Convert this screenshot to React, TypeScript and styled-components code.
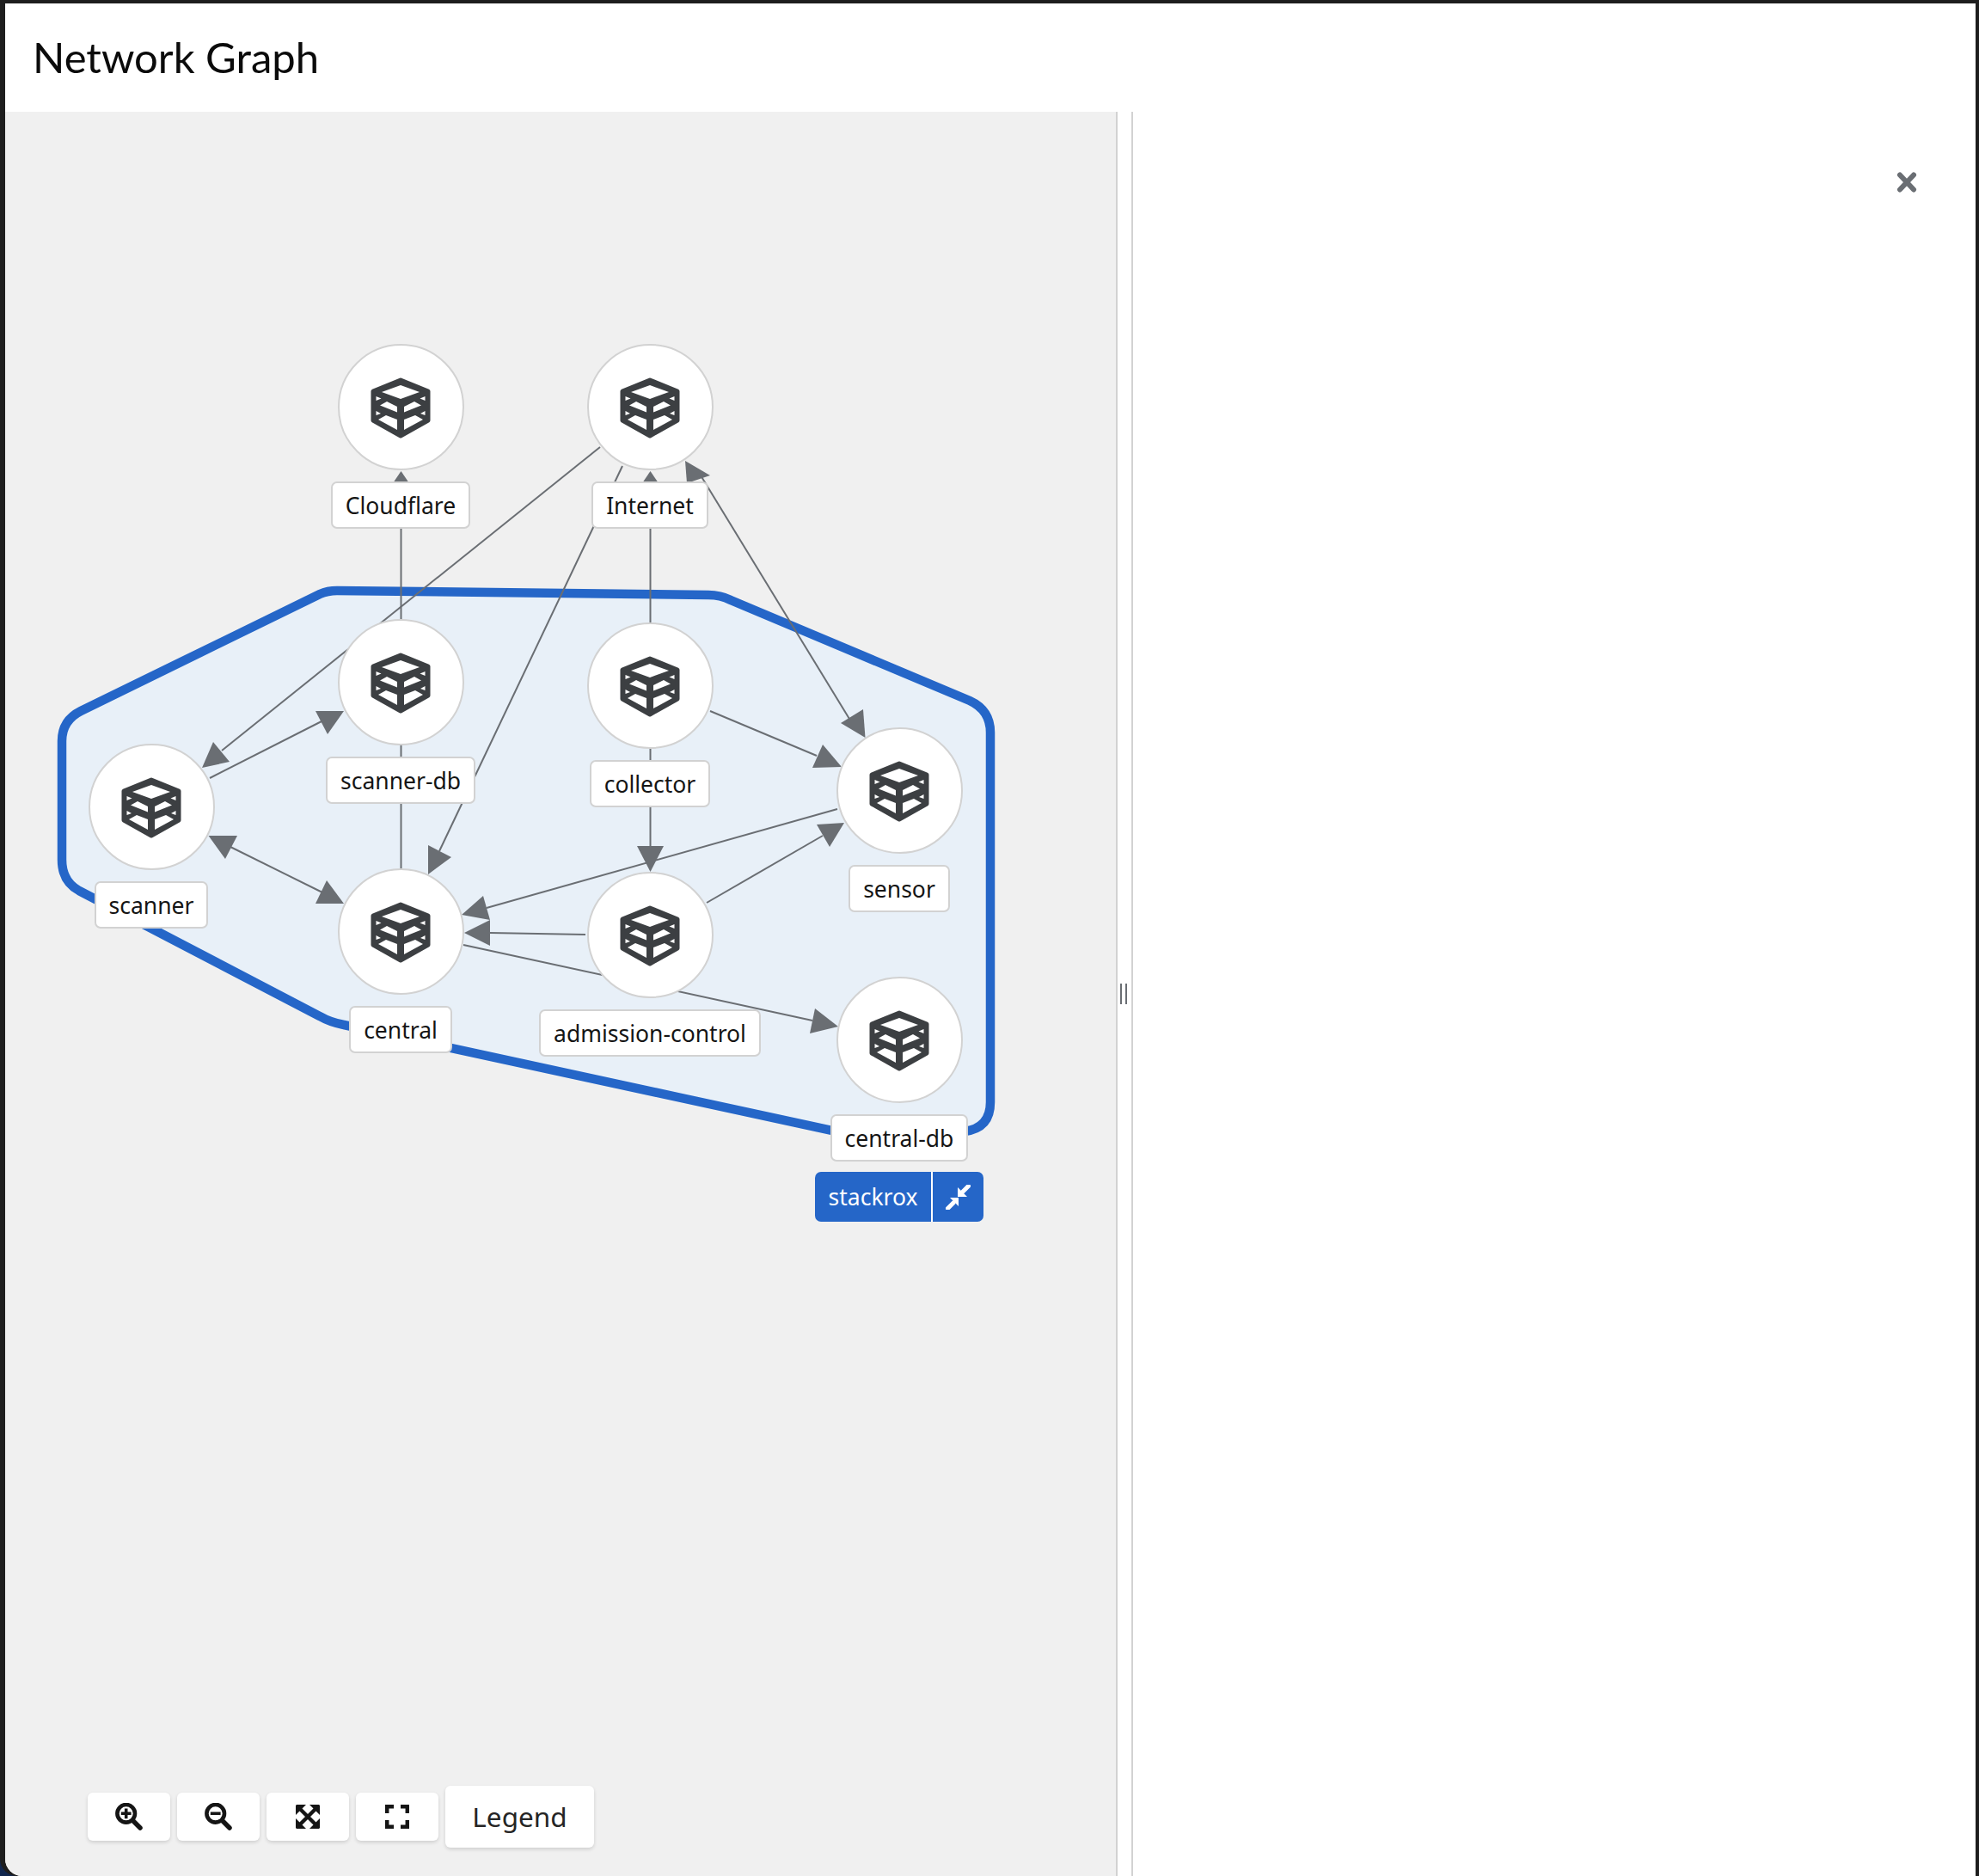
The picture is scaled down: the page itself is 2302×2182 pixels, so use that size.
import React from "react";
import styled, { createGlobalStyle } from "styled-components";

const GlobalStyle = createGlobalStyle`
  html, body {
    margin: 0;
    padding: 0;
    background: #11264d;
  }
  * {
    box-sizing: border-box;
  }
`;

const Frame = styled.div`
  width: 2302px;
  height: 2182px;
  padding: 4px 4px 0 6px;
  background: #1e1e1e;
  border-bottom-left-radius: 20px;
  font-family: "Noto Sans", "Liberation Sans", sans-serif;
  overflow: hidden;
`;
const Page = styled.div`
  display: flex;
  flex-direction: column;
  height: 100%;
  background: #fff;
  border-bottom-left-radius: 20px;
  overflow: hidden;
`;
const Header = styled.header`
  display: flex;
  align-items: center;
  height: 126px;
  padding: 0 0 2px 32px;
  flex: none;
`;
const Title = styled.h1`
  margin: 0;
  font-family: "Lato", "Noto Sans", sans-serif;
  font-size: 49px;
  font-weight: 400;
  color: #0b0b0b;
`;
const Body = styled.div`
  display: flex;
  flex: 1;
  min-height: 0;
`;
const GraphPanel = styled.section`
  position: relative;
  width: 1294px;
  flex: none;
  background: #f0f0f0;
  border-right: 2px solid #d2d2d2;
`;
const Splitter = styled.div`
  display: flex;
  align-items: center;
  justify-content: center;
  gap: 4px;
  width: 18px;
  flex: none;
  padding-right: 2px;
  background: #fff;
  border-right: 2px solid #d2d2d2;
`;
const Grip = styled.span`
  width: 2px;
  height: 24px;
  background: #6a6e73;
`;
const Side = styled.aside`
  flex: 1;
  display: flex;
  justify-content: flex-end;
  align-items: flex-start;
  padding: 70px 68px 0 0;
  background: #fff;
`;
const CloseIcon = styled.svg`
  display: block;
  width: 24px;
  height: 24px;
  color: #6a6e73;
`;
const Edges = styled.svg`
  position: absolute;
  left: 0;
  top: 0;
`;
const NodeGroup = styled.div`
  position: absolute;
  display: flex;
  flex-direction: column;
  align-items: center;
  gap: 13px;
  width: 400px;
  margin-left: -200px;
`;
const Circle = styled.div`
  display: flex;
  align-items: center;
  justify-content: center;
  width: 147px;
  height: 147px;
  border-radius: 50%;
  background: #fff;
  border: 2px solid #d2d2d2;
`;
const NodeLabel = styled.div`
  display: flex;
  align-items: center;
  height: 55px;
  padding: 0 15px;
  border-radius: 7px;
  background: #fff;
  border: 2px solid #d2d2d2;
  font-size: 26.5px;
  color: #151515;
  white-space: nowrap;
`;
const GroupBadge = styled.div`
  position: absolute;
  left: 942px;
  top: 1233px;
  display: flex;
  height: 58px;
  width: 196px;
  border-radius: 7px;
  background: #2566c8;
  color: #fff;
  font-size: 26.5px;
  overflow: hidden;
`;
const GroupName = styled.div`
  display: flex;
  align-items: center;
  justify-content: center;
  width: 137px;
  border-right: 2px solid #fff;
`;
const GroupToggle = styled.div`
  flex: 1;
  display: flex;
  align-items: center;
  justify-content: center;
`;
const Toolbar = styled.div`
  position: absolute;
  left: 96px;
  bottom: 33px;
  display: flex;
  align-items: center;
  gap: 8px;
`;
const ToolButton = styled.button`
  display: flex;
  align-items: center;
  justify-content: center;
  width: 96px;
  height: 56px;
  padding: 0;
  border: 0;
  border-radius: 6px;
  background: #fff;
  color: #151515;
  box-shadow: 0 2px 4px rgba(3, 3, 3, 0.14);
`;
const LegendButton = styled(ToolButton)`
  width: 173px;
  height: 72px;
  padding-bottom: 2px;
  font-family: "Noto Sans", sans-serif;
  font-size: 31.5px;
  font-weight: 400;
  color: #252525;
`;

const OX = 6;
const OY = 130;
const CANVAS_W = 1292;
const CANVAS_H = 2052;

// node centres in page pixels
const nodes = [
  { name: "Cloudflare", x: 466, y: 473 },
  { name: "Internet", x: 756, y: 473 },
  { name: "scanner-db", x: 466, y: 793 },
  { name: "collector", x: 756, y: 797 },
  { name: "scanner", x: 176, y: 938 },
  { name: "central", x: 466, y: 1083 },
  { name: "admission-control", x: 756, y: 1087 },
  { name: "sensor", x: 1046, y: 919 },
  { name: "central-db", x: 1046, y: 1209 },
];

const lines = [
  [466.5, 1010, 466.5, 560],
  [756.5, 724, 756.5, 560],
  [698, 520, 258, 873],
  [244, 905, 376, 838],
  [724, 542, 511, 990],
  [812, 548, 991, 841],
  [268, 985, 375, 1038],
  [826, 827, 950, 879],
  [756.5, 870, 756.5, 990],
  [974, 941, 566, 1056],
  [822, 1050, 957, 972],
  [681, 1087, 570, 1085],
  [539, 1099, 945, 1187],
];

const heads = [
  "466.5,548 457,562 476,562",
  "756.5,548 747,562 766,562",
  "235,893 248,863 267,886",
  "400,827 367,827 381,854",
  "498,1017 498,983 525,997",
  "797,536 826,553 799,562",
  "1006.5,858 978,841 1004,825",
  "242.5,972 276,972 262,999",
  "400,1051 367,1051 380,1024",
  "979,892 945,893 957,866",
  "756.5,1014 741,984 772,984",
  "537,1064 562,1042 570,1070",
  "982,957 950,959 965,985",
  "540,1085 570,1070 570,1100",
  "975,1194 948,1173 942,1202",
];

const hull =
  "M72 862 Q72 838 94 827 L372 691 Q381 687 392 687 L824 692 Q838 692 850 698 L1128 815 Q1152 826 1152 852 L1152 1282 Q1152 1312 1122 1316 L1000 1322 L400 1192 Q384 1189 372 1182 L92 1036 Q72 1025 72 1000 Z";

function Cube() {
  const right = [
    "0,-26 22,-18 0,-10",
    "28.5,-13 28.5,-8 22.5,-10.5",
    "4,-1 16,-7 24,-2.5 4,5.5",
    "28.5,4 28.5,9 23,7",
    "4,14 17,9 26,14 4,26",
  ];
  return (
    <svg width="76" height="76" viewBox="-38 -38 76 76">
      <polygon
        points="0,-32 32,-19 32,15 0,33 -32,15 -32,-19"
        fill="#3c3f42"
        stroke="#3c3f42"
        strokeWidth="5"
        strokeLinejoin="round"
      />
      <g fill="#fff">
        {right.map((p) => (
          <polygon key={p} points={p} />
        ))}
        {right.map((p) => (
          <polygon key={p} points={p} transform="scale(-1 1)" />
        ))}
      </g>
    </svg>
  );
}

function ZoomIcon({ plus }: { plus?: boolean }) {
  return (
    <svg width="32" height="32" viewBox="0 0 32 32" fill="none" stroke="currentColor">
      <circle cx="12.7" cy="12.3" r="10.3" strokeWidth="4.6" />
      <path d="M20.5 20.5L29 29" strokeWidth="5.5" strokeLinecap="round" />
      <path d="M6.8 12.3H18.6" strokeWidth="3.6" />
      {plus && <path d="M12.7 6.4V18.2" strokeWidth="3.6" />}
    </svg>
  );
}

function FitIcon() {
  return (
    <svg width="28" height="28" viewBox="0 0 28 28" fill="currentColor">
      <path d="M5 5L23 23M23 5L5 23" stroke="currentColor" strokeWidth="4.4" />
      <path d="M1 0H12L0 12V1Z" />
      <path d="M27 0H16L28 12V1Z" />
      <path d="M1 28H12L0 16V27Z" />
      <path d="M27 28H16L28 16V27Z" />
    </svg>
  );
}

function FullIcon() {
  return (
    <svg width="28" height="28" viewBox="0 0 28 28" fill="none" stroke="currentColor" strokeWidth="4.5">
      <path d="M2.2 10V2.2H10M18 2.2H25.8V10M25.8 18V25.8H18M10 25.8H2.2V18" />
    </svg>
  );
}

function CollapseIcon() {
  return (
    <svg width="29" height="29" viewBox="0 0 29 29" fill="#fff">
      <path d="M15 15H5L15 25Z" />
      <path d="M14 14V3L25 14Z" />
      <path d="M9 21L2.5 27.5M20 8L26.5 1.5" stroke="#fff" strokeWidth="5" strokeLinecap="round" />
    </svg>
  );
}

export default function App() {
  return (
    <>
      <GlobalStyle />
      <Frame>
        <Page>
          <Header>
            <Title>Network Graph</Title>
          </Header>
          <Body>
            <GraphPanel>
              <Edges
                width={CANVAS_W}
                height={CANVAS_H}
                viewBox={`${OX} ${OY} ${CANVAS_W} ${CANVAS_H}`}
              >
                <path d={hull} fill="#e8f0f8" stroke="#2566c8" strokeWidth="10.5" />
                {lines.map(([x1, y1, x2, y2]) => (
                  <line
                    key={`${x1}-${y1}`}
                    x1={x1}
                    y1={y1}
                    x2={x2}
                    y2={y2}
                    stroke="#6a6e73"
                    strokeWidth="2"
                  />
                ))}
                {heads.map((points) => (
                  <polygon key={points} points={points} fill="#6a6e73" />
                ))}
              </Edges>
              {nodes.map((n) => (
                <NodeGroup
                  key={n.name}
                  style={{ left: n.x - OX, top: n.y - 73 - OY }}
                >
                  <Circle>
                    <Cube />
                  </Circle>
                  <NodeLabel>{n.name}</NodeLabel>
                </NodeGroup>
              ))}
              <GroupBadge>
                <GroupName>stackrox</GroupName>
                <GroupToggle>
                  <CollapseIcon />
                </GroupToggle>
              </GroupBadge>
              <Toolbar>
                <ToolButton aria-label="Zoom in">
                  <ZoomIcon plus />
                </ToolButton>
                <ToolButton aria-label="Zoom out">
                  <ZoomIcon />
                </ToolButton>
                <ToolButton aria-label="Fit to screen">
                  <FitIcon />
                </ToolButton>
                <ToolButton aria-label="Reset view">
                  <FullIcon />
                </ToolButton>
                <LegendButton>Legend</LegendButton>
              </Toolbar>
            </GraphPanel>
            <Splitter>
              <Grip />
              <Grip />
            </Splitter>
            <Side>
              <CloseIcon viewBox="0 0 24 24" fill="none" stroke="currentColor" strokeWidth="6" strokeLinecap="round">
                <path d="M4 3.5L20 20.5M20 3.5L4 20.5" />
              </CloseIcon>
            </Side>
          </Body>
        </Page>
      </Frame>
    </>
  );
}
